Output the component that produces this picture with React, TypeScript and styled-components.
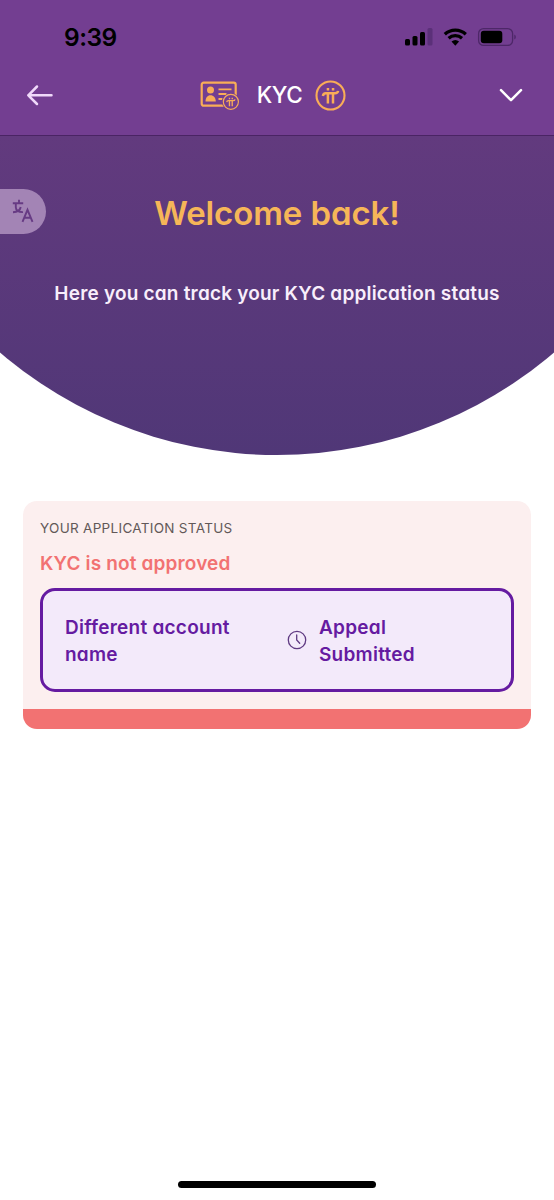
import React from "react";
import styled, { createGlobalStyle } from "styled-components";

const GlobalStyle = createGlobalStyle`
  * { box-sizing: border-box; }
  body { margin: 0; background: #fff; }
  h1, h2, p { margin: 0; }
`;

const Screen = styled.div`
  width: 100%;
  height: 1200px;
  display: flex;
  flex-direction: column;
  background: #fff;
  font-family: Inter, Lato, sans-serif;
  font-feature-settings: "cv11";
`;

const TopArea = styled.header`
  height: 136px;
  background: #733e91;
  border-bottom: 1px solid #4a2464;
`;

const StatusBar = styled.div`
  height: 72px;
  padding: 2px 38px 0 64px;
  display: flex;
  align-items: center;
  justify-content: space-between;
`;

const Clock = styled.span`
  font-size: 24.5px;
  font-weight: 600;
  letter-spacing: -0.5px;
  color: #000;
`;

const StatusIcons = styled.svg`
  display: block;
`;

const NavBar = styled.nav`
  height: 46px;
  padding: 0 31px 0 26px;
  display: grid;
  grid-template-columns: 28px 1fr 24px;
  align-items: center;
`;

const Brand = styled.div`
  display: flex;
  align-items: center;
  justify-content: center;
  padding-right: 7px;
`;

const BrandName = styled.span`
  margin: 0 13px 0 17px;
  font-family: Inter, sans-serif;
  font-size: 22.5px;
  font-weight: 500;
  letter-spacing: -0.5px;
  line-height: 30px;
  color: #fff;
`;

const Hero = styled.section`
  position: relative;
  height: 319px;
  padding-top: 52px;
  background: linear-gradient(#623a7e, #503777);
  clip-path: circle(425.5px at 50% -106.5px);
  text-align: center;
`;

const LanguageTab = styled.button`
  position: absolute;
  left: 0;
  top: 53px;
  width: 45.5px;
  height: 45px;
  padding: 0 0 2px 12px;
  border: 0;
  border-radius: 0 23px 23px 0;
  background: #a384b5;
  display: flex;
  align-items: center;
`;

const Title = styled.h1`
  font-size: 33px;
  line-height: 50px;
  font-weight: 600;
  letter-spacing: -0.1px;
  color: #f6b658;
`;

const Subtitle = styled.p`
  margin-top: 43px;
  font-size: 19px;
  line-height: 26px;
  font-weight: 600;
  letter-spacing: 0.2px;
  color: #f8eefb;
`;

const Card = styled.section`
  margin: 46px 23px 0;
  height: 228px;
  padding: 17px 17px 0;
  border-radius: 14px;
  border-bottom: 20px solid #f27272;
  background: #fcefef;
  overflow: hidden;
`;

const CardLabel = styled.p`
  font-size: 13.5px;
  line-height: 20px;
  letter-spacing: 0.3px;
  color: #625858;
`;

const CardHeading = styled.h2`
  margin-top: 12px;
  font-size: 19px;
  line-height: 27px;
  font-weight: 600;
  letter-spacing: 0.15px;
  color: #f27272;
`;

const ReasonBox = styled.div`
  margin-top: 10.5px;
  height: 104.5px;
  padding: 0 22px;
  border: 3px solid #651ba1;
  border-radius: 15px;
  background: #f3eafa;
  display: grid;
  grid-template-columns: 221.5px 32.5px 1fr;
  align-items: center;
`;

const ReasonText = styled.p<{ $width: number }>`
  width: ${(p) => p.$width}px;
  padding-top: 2px;
  font-size: 19px;
  line-height: 27px;
  font-weight: 600;
  letter-spacing: 0.25px;
  color: #651ba1;
`;

const HomeIndicator = styled.div`
  width: 198px;
  height: 7px;
  margin: auto auto 12px;
  border-radius: 4px;
  background: #000;
`;

const PiMark = () => (
  <g fill="none" stroke="#f9ad57">
    <circle cx="15.5" cy="15.5" r="14" strokeWidth="2.1" />
    <path d="M7.900 16c.2-1.900 1.200-2.700 2.900-2.700h9.200c1.700 0 2.800-.6 3.100-2.400M12.900 13.300v10.200M18 13.300v10.200" strokeWidth="2.500" />
    <path d="M11.700 9.300h2.500M16.800 9.300h2.500" strokeWidth="2.500" />
  </g>
);

const IdCardIcon = () => (
  <svg width="40" height="30" viewBox="0 0 40 30">
    <rect x="1.700" y="2.700" width="34" height="23" rx="2" fill="none" stroke="#f9ad57" strokeWidth="2.200" />
    <circle cx="10.500" cy="10" r="3.500" fill="#f9ad57" />
    <path d="M5.500 21.500c0-4 2-6.300 5-6.300s5.300 2.300 5.300 6.300z" fill="#f9ad57" />
    <path d="M18.500 9.300h13M18.500 14h8M18.500 19h4" stroke="#f9ad57" strokeWidth="1.800" />
    <circle cx="31" cy="22" r="9" fill="#733e91" />
    <g transform="translate(22.500 13.500) scale(.54)"><PiMark /></g>
  </svg>
);

export default function App() {
  return (
    <Screen>
      <GlobalStyle />
      <TopArea>
        <StatusBar>
          <Clock>9:39</Clock>
          <StatusIcons width="112" height="20" viewBox="0 0 112 20">
            <rect x="1" y="12" width="5" height="6.500" rx="1.500" />
            <rect x="8.500" y="9" width="5" height="9.500" rx="1.500" />
            <rect x="16" y="5" width="5" height="13.500" rx="1.500" />
            <rect x="23.500" y="1" width="5" height="17.500" rx="1.500" fill="#5b3079" />
            <path d="M40.800 7.300a15.500 15.500 0 0 1 21 0" fill="none" stroke="#000" strokeWidth="3.300" />
            <path d="M44.600 11.300a10 10 0 0 1 13.400 0" fill="none" stroke="#000" strokeWidth="3.200" />
            <path d="M47.500 14.600a6 6 0 0 1 7.600 0L51.300 18.700z" />
            <rect x="74.600" y="1.600" width="34" height="16.800" rx="5" fill="none" stroke="#4d2768" strokeWidth="1.300" />
            <rect x="76.800" y="3.800" width="21.500" height="12.400" rx="3" />
            <path d="M110.300 7.500c2 .8 2 4.200 0 5z" fill="#4d2768" />
          </StatusIcons>
        </StatusBar>
        <NavBar>
          <svg width="28" height="22" viewBox="0 0 28 22" fill="none" stroke="#f0d9fa" strokeWidth="2.500" strokeLinecap="round" strokeLinejoin="round">
            <path d="M25.500 11.300H2.300M11 2.500L2.300 11.300l8.700 8.700" />
          </svg>
          <Brand>
            <IdCardIcon />
            <BrandName>KYC</BrandName>
            <svg width="31" height="31" viewBox="0 0 31 31"><PiMark /></svg>
          </Brand>
          <svg width="24" height="14" viewBox="0 0 24 14" fill="none" stroke="#fff" strokeWidth="2.500" strokeLinecap="round" strokeLinejoin="round">
            <path d="M2 2.200l10 10 10-10" />
          </svg>
        </NavBar>
      </TopArea>
      <Hero>
        <LanguageTab aria-label="Language">
          <svg width="22" height="24" viewBox="0 0 22 24" fill="none" stroke="#673b84" strokeWidth="1.900">
            <path d="M.8 4.300h10.400M7 .8v3.500M3.800 4.800v3.500c0 3 2.500 5 7.200 4.800M8.700 8c-.5 3-3 5-7.700 5.200M10.500 22.800l5-12 5 12M12.200 18.800h6.600" />
          </svg>
        </LanguageTab>
        <Title>Welcome back!</Title>
        <Subtitle>Here you can track your KYC application status</Subtitle>
      </Hero>
      <Card>
        <CardLabel>YOUR APPLICATION STATUS</CardLabel>
        <CardHeading>KYC is not approved</CardHeading>
        <ReasonBox>
          <ReasonText $width={180}>Different account name</ReasonText>
          <svg width="20" height="20" viewBox="0 0 20 20" fill="none" stroke="#5f3a82" strokeWidth="1.300" strokeLinecap="round">
            <circle cx="10" cy="10" r="8.700" />
            <path d="M9.700 5v5l3 3.200" />
          </svg>
          <ReasonText $width={110}>Appeal Submitted</ReasonText>
        </ReasonBox>
      </Card>
      <HomeIndicator />
    </Screen>
  );
}
